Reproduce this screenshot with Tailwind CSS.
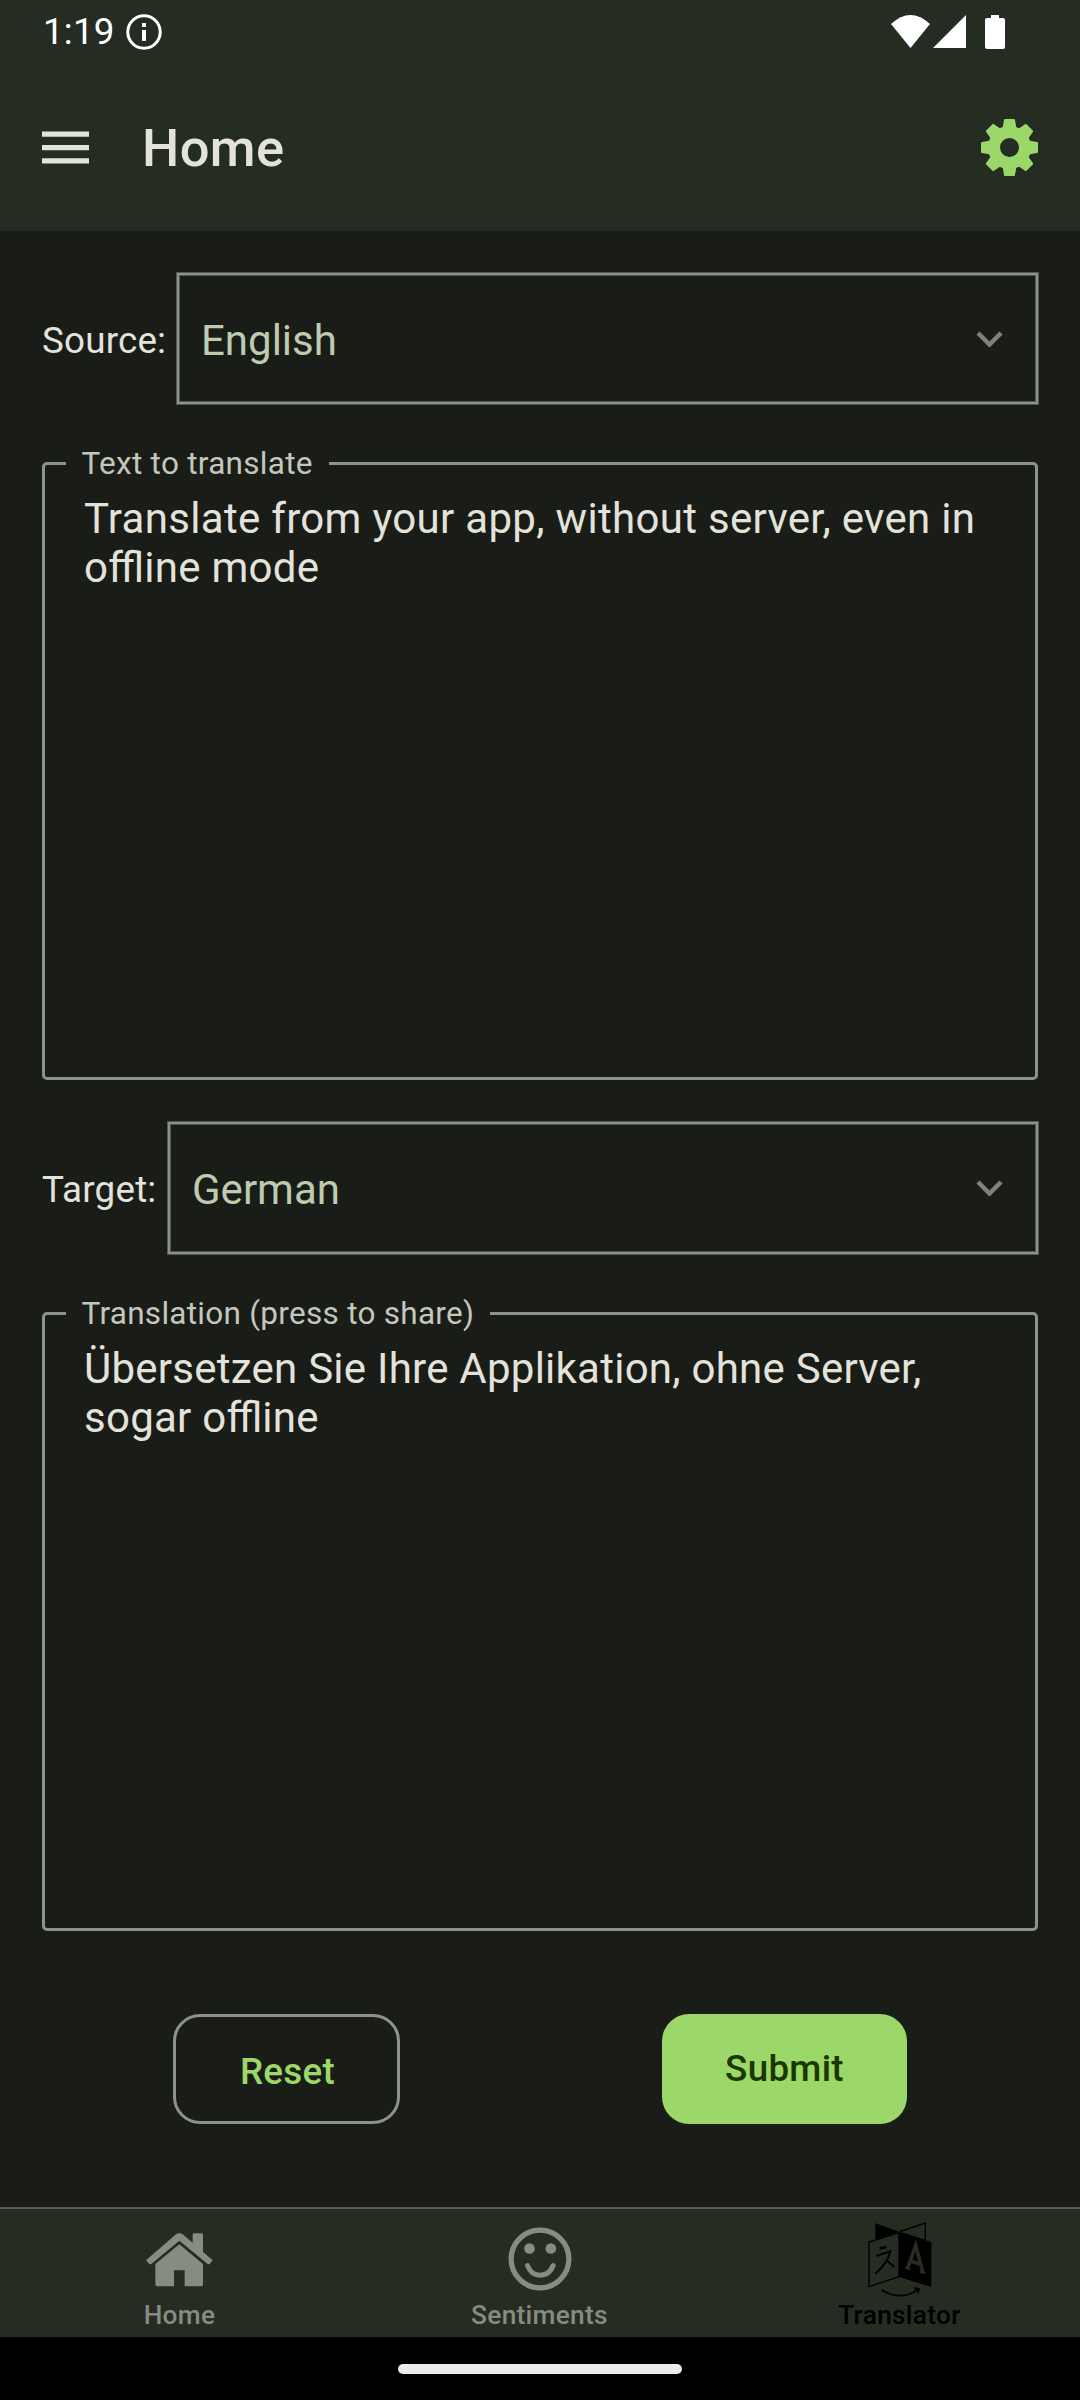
<!DOCTYPE html>
<html lang="en">
<head>
<meta charset="utf-8">
<title>Translator</title>
<script src="https://cdn.jsdelivr.net/npm/@tailwindcss/browser@4"></script>
</head>
<body class="bg-black">
<div class="flex h-[2400px] w-[1080px] flex-col overflow-hidden bg-[#1a1c18] font-['Roboto',sans-serif] text-[#e3e3dc]">

  <header class="flex h-[231px] shrink-0 flex-col bg-[#252c22]">
    <div class="flex h-[63px] items-center justify-between pr-[74px] pl-[43px] text-white">
      <div class="flex items-center gap-[11px]">
        <span class="text-[36.75px] leading-[63px] tracking-[0.2px]">1:19</span>
        <svg class="size-9" viewBox="0 0 36 36" fill="none"><circle cx="18" cy="18" r="16.2" stroke="currentColor" stroke-width="3"/><path d="M18 9v4M18 16v11" stroke="currentColor" stroke-width="4"/></svg>
      </div>
      <svg class="h-[34px] w-[115px]" viewBox="0 0 115 34" fill="currentColor"><path d="M0 9Q19.500-9 39 9L19.500 33Z"/><path d="M42 33 75 0V33Z"/><path d="M100 0h8v3h4q2 0 2 2V32q0 2-2 2H96q-2 0-2-2V5q0-2 2-2h4Z"/></svg>
    </div>
    <div class="flex h-[168px] items-center pr-[42px] pl-[42px]">
      <svg class="mr-[53px] h-[33px] w-[47px]" viewBox="0 0 47 33" fill="currentColor"><path d="M0 .500h47v5.300H0zM0 14h47v5.300H0zM0 27.200h47v5.300H0z"/></svg>
      <h1 class="grow pt-[2px] text-[52.5px] leading-[62px] font-medium tracking-[0.4px]">Home</h1>
      <svg class="size-[57px] text-[#9cd769]" viewBox="-28.500 -28.500 57 57" fill="currentColor">
        <defs><path id="tooth" d="M-7-19-5.500-27.500Q-5.400-28.500-4.500-28.500H4.500Q5.400-28.500 5.500-27.500L7-19Z"/></defs>
        <circle r="15.500" fill="none" stroke="currentColor" stroke-width="12"/>
        <use href="#tooth"/><use href="#tooth" transform="rotate(45)"/><use href="#tooth" transform="rotate(90)"/><use href="#tooth" transform="rotate(135)"/><use href="#tooth" transform="rotate(180)"/><use href="#tooth" transform="rotate(225)"/><use href="#tooth" transform="rotate(270)"/><use href="#tooth" transform="rotate(315)"/>
      </svg>
    </div>
  </header>

  <main class="flex h-[1976px] shrink-0 flex-col px-[42px] pt-[42px]">
    <div class="flex h-[131px] items-center">
      <span class="w-[135px] pt-[3px] text-[36.75px] leading-[43px] tracking-[0.2px] whitespace-nowrap">Source:</span>
      <div class="flex h-[131px] w-[861px] items-center justify-between border-2 border-[#8d9387] pr-[33px] pl-[22px] ring-1 ring-[#8d9387]/50 inset-ring inset-ring-[#8d9387]/50">
        <span class="pt-[3px] text-[42px] leading-[49px] text-[#bdcbaf]">English</span>
        <svg class="mt-[1px] h-[16px] w-[27px]" viewBox="0 0 27 16" fill="none"><path d="M2 2 13.500 13.500 25 2" stroke="#808080" stroke-width="4.500"/></svg>
      </div>
    </div>

    <fieldset class="mt-[41px] h-[635px] rounded-[5px] border-3 border-[#8d9387]">
      <legend class="ml-[21px] h-[37px] pr-[16px] pl-[15.5px] text-[31.5px] leading-[37px] tracking-[0.28px] text-[#c3c8bb]">Text to translate</legend>
      <p class="mt-[12px] pl-[39px] text-[42px] leading-[49px] tracking-[0.31px] whitespace-nowrap">Translate from your app, without server, even in<br>o<span class="tracking-normal">ffl</span>ine mode</p>
    </fieldset>

    <div class="mt-[42px] flex h-[132px] items-center">
      <span class="w-[126px] pt-[2px] text-[36.75px] leading-[43px] tracking-[0.2px] whitespace-nowrap">Target:</span>
      <div class="flex h-[132px] w-[870px] items-center justify-between border-2 border-[#8d9387] pr-[33px] pl-[22px] ring-1 ring-[#8d9387]/50 inset-ring inset-ring-[#8d9387]/50">
        <span class="pt-[3px] text-[42px] leading-[49px] text-[#bdcbaf]">German</span>
        <svg class="h-[16px] w-[27px]" viewBox="0 0 27 16" fill="none"><path d="M2 2 13.500 13.500 25 2" stroke="#808080" stroke-width="4.500"/></svg>
      </div>
    </div>

    <fieldset class="mt-[41px] h-[636px] rounded-[5px] border-3 border-[#8d9387]">
      <legend class="ml-[21px] h-[37px] pr-[16px] pl-[15.5px] text-[31.5px] leading-[37px] tracking-[0.28px] text-[#c3c8bb]">Translation (press to share)</legend>
      <p class="mt-[12px] pl-[39px] text-[42px] leading-[49px] tracking-[0.25px] whitespace-nowrap">Übersetzen Sie Ihre Applikation, ohne Server,<br>sogar o<span class="tracking-normal">ffl</span>ine</p>
    </fieldset>

    <div class="mt-[83px] flex pl-[131px] text-[36.75px] leading-[43px] font-medium tracking-[0.3px]">
      <button class="mr-[262px] h-[110px] w-[227px] rounded-[27px] border-3 border-[#8d9387] pt-[5px] pl-[2px] text-[#9cd769]">Reset</button>
      <button class="h-[110px] w-[245px] rounded-[27px] bg-[#9cd769] pb-[2px] text-[#1b3700]">Submit</button>
    </div>
  </main>

  <nav class="grid h-[130px] shrink-0 grid-cols-3 border-t-2 border-[#565c50] bg-[#252c22] text-[26.25px] leading-[31px] font-medium tracking-[0.3px] text-[#878b81]">
    <div class="flex flex-col items-center pr-[1px]">
      <svg class="mt-[24px] h-[54px] w-[67px]" viewBox="138 128 201 162" fill="currentColor"><path d="M138 210 228 132Q238 125 248 132L278 157V133q0-4 4-4h23q4 0 4 4V185L338 210 329 221Q326 223 322 220L238 151 155 220Q151 223 147 220Z"/><path d="M238 162 309 221V282q0 6-6 6H254V240H222V288H172q-6 0-6-6V221Z"/></svg>
      <span class="mt-[13px]">Home</span>
    </div>
    <div class="flex flex-col items-center pr-[1px]">
      <svg class="mt-[18px] size-[64px]" viewBox="202.500 112.500 192 192" fill="currentColor"><circle cx="298.500" cy="208.500" r="86.500" fill="none" stroke="currentColor" stroke-width="16"/><circle cx="267" cy="177" r="16"/><circle cx="331" cy="177" r="16"/><path d="M261 228Q271 257 299 257Q327 257 338 228" fill="none" stroke="currentColor" stroke-width="15" stroke-linecap="round"/></svg>
      <span class="mt-[9px]">Sentiments</span>
    </div>
    <div class="flex flex-col items-center pr-[1px] text-black">
      <svg class="mt-[13px] h-[75px] w-[64px]" viewBox="143 96 192 225" fill="none" stroke="currentColor" stroke-width="4">
        <path d="M165 100 236 125 165 148Z" fill="currentColor" stroke="none"/>
        <path d="M238 125 315 99V151M238 127 315 151"/>
        <path d="M146 156 236 128V260L146 290Z" fill="#252c22"/>
        <path d="M236 126 333 156V291L236 261Z" fill="currentColor" stroke="none"/>
        <path d="M262 234 286 166 308 248M270 214 300 222" stroke="#252c22" stroke-width="11"/><path d="M254 233 270 238M299 246 315 250" stroke="#252c22" stroke-width="6"/>
        <path d="M178 175 198 171" stroke-width="8"/><path d="M168 198 210 184Q202 220 165 251M197 210 222 230" stroke-width="6"/>
        <path d="M184 300Q236 333 288 302" stroke-width="5"/><path d="M279 291 299 294 294 312Z" fill="currentColor" stroke="none"/>
      </svg>
      <span class="mt-[3px]">Translator</span>
    </div>
  </nav>

  <footer class="flex h-[63px] shrink-0 justify-center bg-black pt-[27px]">
    <div class="h-[10px] w-[284px] rounded-full bg-[#ececec]"></div>
  </footer>
</div>
</body>
</html>
